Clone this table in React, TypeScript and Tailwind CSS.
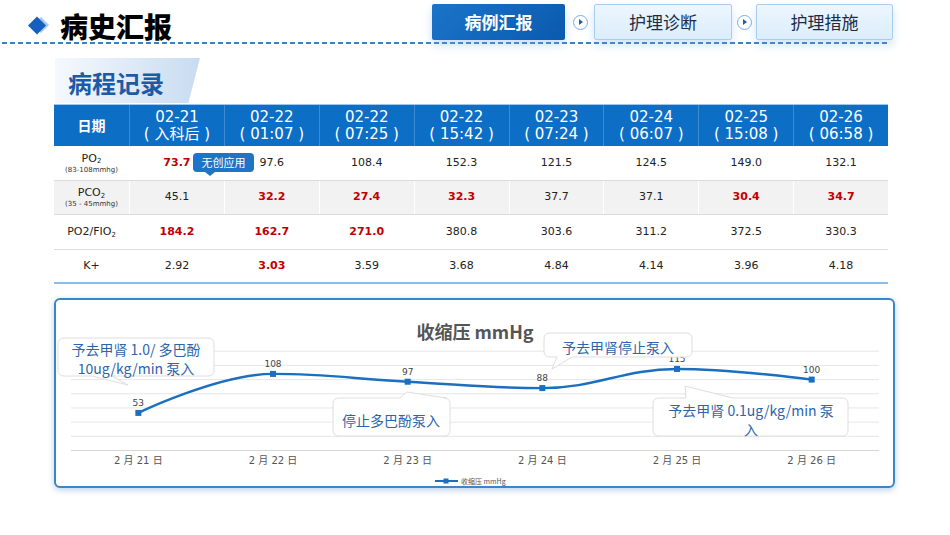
import React from "react";

const dates = [
  ["02-21", "( 入科后 )"],
  ["02-22", "( 01:07 )"],
  ["02-22", "( 07:25 )"],
  ["02-22", "( 15:42 )"],
  ["02-23", "( 07:24 )"],
  ["02-24", "( 06:07 )"],
  ["02-25", "( 15:08 )"],
  ["02-26", "( 06:58 )"],
];

// "*" marks an abnormal value (red, bold)
const rows = [
  {
    label: (
      <div className="flex flex-col items-center leading-none">
        <span className="text-[11px]">
          PO<sub className="text-[7px]">2</sub>
        </span>
        <span className="text-[7px] mt-[3px] text-[#333]">(83-108mmhg)</span>
      </div>
    ),
    gray: false,
    h: "h-[35px]",
    cells: ["73.7*", "97.6", "108.4", "152.3", "121.5", "124.5", "149.0", "132.1"],
  },
  {
    label: (
      <div className="flex flex-col items-center leading-none">
        <span className="text-[11px]">
          PCO<sub className="text-[7px]">2</sub>
        </span>
        <span className="text-[7px] mt-[3px] text-[#333]">(35 - 45mmhg)</span>
      </div>
    ),
    gray: true,
    h: "h-[34px]",
    cells: ["45.1", "32.2*", "27.4*", "32.3*", "37.7", "37.1", "30.4*", "34.7*"],
  },
  {
    label: (
      <span className="text-[11px]">
        PO2/FIO<sub className="text-[7px]">2</sub>
      </span>
    ),
    gray: false,
    h: "h-[35px]",
    cells: ["184.2*", "162.7*", "271.0*", "380.8", "303.6", "311.2", "372.5", "330.3"],
  },
  {
    label: <span className="text-[11px]">K+</span>,
    gray: false,
    h: "h-[34px]",
    cells: ["2.92", "3.03*", "3.59", "3.68", "4.84", "4.14", "3.96", "4.18"],
  },
];

const chartData = [
  { label: "2 月 21 日", v: 53 },
  { label: "2 月 22 日", v: 108 },
  { label: "2 月 23 日", v: 97 },
  { label: "2 月 24 日", v: 88 },
  { label: "2 月 25 日", v: 115 },
  { label: "2 月 26 日", v: 100 },
];

const plotLeft = 71;
const plotRight = 879;
const baseY = 451.5;
const unit = 0.7091;

type Pt = { x: number; y: number; lcx?: number; lcy?: number; rcx?: number; rcy?: number };

function splinePath(pts: Pt[]) {
  const sm = 1.5;
  const den = sm + 1;
  for (let i = 1; i < pts.length - 1; i++) {
    const p = pts[i];
    const a = pts[i - 1];
    const b = pts[i + 1];
    const lcx = (sm * p.x + a.x) / den;
    let lcy = (sm * p.y + a.y) / den;
    const rcx = (sm * p.x + b.x) / den;
    let rcy = (sm * p.y + b.y) / den;
    const corr = ((rcy - lcy) * (rcx - p.x)) / (rcx - lcx) + p.y - rcy;
    lcy += corr;
    rcy += corr;
    if (lcy > a.y && lcy > p.y) {
      lcy = Math.max(a.y, p.y);
      rcy = 2 * p.y - lcy;
    } else if (lcy < a.y && lcy < p.y) {
      lcy = Math.min(a.y, p.y);
      rcy = 2 * p.y - lcy;
    }
    if (rcy > b.y && rcy > p.y) {
      rcy = Math.max(b.y, p.y);
      lcy = 2 * p.y - rcy;
    } else if (rcy < b.y && rcy < p.y) {
      rcy = Math.min(b.y, p.y);
      lcy = 2 * p.y - rcy;
    }
    p.lcx = lcx;
    p.lcy = lcy;
    p.rcx = rcx;
    p.rcy = rcy;
  }
  let d = `M${pts[0].x} ${pts[0].y}`;
  for (let i = 1; i < pts.length; i++) {
    const a = pts[i - 1];
    const p = pts[i];
    d += ` C${a.rcx ?? a.x} ${a.rcy ?? a.y} ${p.lcx ?? p.x} ${p.lcy ?? p.y} ${p.x} ${p.y}`;
  }
  return d;
}

function calloutPath(
  x: number,
  y: number,
  w: number,
  h: number,
  side: "top" | "bottom",
  ax: number,
  bx: number,
  tx: number,
  ty: number
) {
  const r = 6;
  let d = `M${x + r} ${y}`;
  if (side === "top") d += ` L${ax} ${y} L${tx} ${ty} L${bx} ${y}`;
  d += ` L${x + w - r} ${y} Q${x + w} ${y} ${x + w} ${y + r} L${x + w} ${y + h - r} Q${x + w} ${y + h} ${x + w - r} ${y + h}`;
  if (side === "bottom") d += ` L${bx} ${y + h} L${tx} ${ty} L${ax} ${y + h}`;
  d += ` L${x + r} ${y + h} Q${x} ${y + h} ${x} ${y + h - r} L${x} ${y + r} Q${x} ${y} ${x + r} ${y} Z`;
  return d;
}

function Chart() {
  const step = (plotRight - plotLeft) / chartData.length;
  const pts: Pt[] = chartData.map((d, i) => ({
    x: plotLeft + step * (i + 0.5),
    y: baseY - d.v * unit,
  }));
  const path = splinePath(pts.map((p) => ({ ...p })));
  const grid = [1, 2, 3, 4, 5, 6, 7].map((k) => baseY - k * 20 * unit);

  return (
    <svg viewBox="56 301 837 186" className="absolute inset-0 w-[837px] h-[186px]">
      {grid.map((gy) => (
        <line key={gy} x1={plotLeft} x2={plotRight} y1={gy} y2={gy} stroke="#e6e6e6" strokeWidth="1" />
      ))}
      <line x1={plotLeft} x2={plotRight} y1={baseY} y2={baseY} stroke="#d6d6d6" strokeWidth="1" />

      <text x="475" y="339.5" textAnchor="middle" fontSize="18" fontWeight="700" fill="#555" fontFamily="'Noto Sans CJK SC', sans-serif">
        收缩压 mmHg
      </text>

      <path d={path} fill="none" stroke="#1a6fc0" strokeWidth="2.4" />
      {pts.map((p, i) => (
        <g key={i}>
          <rect x={p.x - 3} y={p.y - 3} width="6" height="6" fill="#1a6fc0" />
          <text x={p.x} y={p.y - 7} textAnchor="middle" fontSize="9" fill="#444" fontFamily="'DejaVu Sans', sans-serif">
            {chartData[i].v}
          </text>
          <text x={p.x} y={464.5} textAnchor="middle" fontSize="10" fill="#555" fontFamily="'DejaVu Sans', 'Noto Sans CJK SC', sans-serif">
            {chartData[i].label}
          </text>
        </g>
      ))}

      <g fontFamily="'Noto Sans CJK SC', sans-serif" fontSize="14" fill="#2d64aa">
        <path d={calloutPath(58, 339, 156, 38, "bottom", 92, 112, 128, 386)} fill="#fff" stroke="#dedede" />
        <text x="136" y="356" textAnchor="middle">予去甲肾 1.0/ 多巴酚</text>
        <text x="136" y="375" textAnchor="middle">10ug/kg/min 泵入</text>

        <path d={calloutPath(333, 399, 117, 38, "top", 400, 446, 407, 393)} fill="#fff" stroke="#dedede" />
        <text x="391" y="427" textAnchor="middle">停止多巴酚泵入</text>

        <path d={calloutPath(544, 334, 148, 24, "bottom", 557, 572, 552, 370)} fill="#fff" stroke="#dedede" />
        <text x="618" y="354" textAnchor="middle">予去甲肾停止泵入</text>

        <path d={calloutPath(653, 399, 195, 38, "top", 686, 733, 685, 387)} fill="#fff" stroke="#dedede" />
        <text x="751" y="416.5" textAnchor="middle">予去甲肾 0.1ug/kg/min 泵</text>
        <text x="751" y="435.5" textAnchor="middle">入</text>
      </g>

      <line x1="435" x2="458" y1="482" y2="482" stroke="#1a6fc0" strokeWidth="2" />
      <rect x="443.5" y="479.5" width="5" height="5" fill="#1a6fc0" />
      <text x="461" y="484.5" fontSize="7" fill="#555" fontFamily="'Noto Sans CJK SC', sans-serif">
        收缩压 mmHg
      </text>
    </svg>
  );
}

function Arrow() {
  return (
    <div className="w-[15px] h-[15px] rounded-full border border-[#7aaee0] bg-white flex items-center justify-center">
      <div className="ml-[1px] w-0 h-0 border-y-[3px] border-y-transparent border-l-[4px] border-l-[#1f5fa8]" />
    </div>
  );
}

export default function App() {
  return (
    <div className="w-[950px] h-[535px] bg-white overflow-hidden [font-family:'Noto_Sans_CJK_SC',sans-serif]">
      {/* header */}
      <div className="h-[42px] flex">
        <div className="pl-[28px] pt-[10px] flex items-center">
          <svg width="22" height="22" viewBox="0 0 22 22">
            <path d="M13 2 L21 10 L13 18 L5 10 Z" fill="#a9c8ee" />
            <path d="M9 1.5 L18 10.5 L9 19.5 L0 10.5 Z" fill="#1560be" />
          </svg>
          <span className="ml-[10px] text-[28px] leading-none font-black text-black">病史汇报</span>
        </div>
        <div className="ml-auto mr-[57px] pt-[4px] flex items-center h-[40px]">
          <div className="w-[133px] h-[36px] rounded-[2px] bg-[linear-gradient(135deg,#1b74c9,#0a5aae)] flex items-center justify-center text-white text-[17px] font-bold shadow-[0_5px_10px_rgba(110,165,225,0.35)]">
            病例汇报
          </div>
          <div className="ml-[8px] mr-[6px]">
            <Arrow />
          </div>
          <div className="w-[138px] h-[36px] rounded-[2px] border border-[#a7cdef] bg-[linear-gradient(180deg,#edf6fe,#dbedfb)] flex items-center justify-center text-[#1b2c48] text-[17px] shadow-[0_5px_10px_rgba(110,165,225,0.3)]">
            护理诊断
          </div>
          <div className="ml-[5px] mr-[4px]">
            <Arrow />
          </div>
          <div className="w-[137px] h-[36px] rounded-[2px] border border-[#a7cdef] bg-[linear-gradient(180deg,#edf6fe,#dbedfb)] flex items-center justify-center text-[#1b2c48] text-[17px] shadow-[0_5px_10px_rgba(110,165,225,0.3)]">
            护理措施
          </div>
        </div>
      </div>
      <div className="ml-[2px] w-[888px] h-[2px] bg-[repeating-linear-gradient(90deg,#3d7fc4_0_5px,transparent_5px_8px)]" />

      {/* section title */}
      <div className="mt-[14px] ml-[55px] w-[145px] h-[45px] bg-[linear-gradient(90deg,#f5f9fd,#c8dcf1)] [clip-path:polygon(0_0,100%_0,92%_100%,0_100%)] flex items-center pl-[13px] pt-[5px]">
        <span className="text-[24px] font-bold text-[#1c5aa8] leading-none">病程记录</span>
      </div>

      {/* table */}
      <div className="relative ml-[54px] mt-[1px] w-[834px] border-t border-[#9cc7ee] [font-family:'DejaVu_Sans','Noto_Sans_CJK_SC',sans-serif]">
        <div className="grid grid-cols-[75px_repeat(8,1fr)] h-[41px] bg-[#0d6ec6] text-white">
          <div className="flex items-center justify-center text-[14px] font-bold [font-family:'Noto_Sans_CJK_SC',sans-serif]">日期</div>
          {dates.map(([d, t], i) => (
            <div key={i} className="border-l border-[#3f8ad4] flex flex-col items-center justify-center text-[15px] leading-[17px]">
              <span>{d}</span>
              <span>{t}</span>
            </div>
          ))}
        </div>
        {rows.map((r, ri) => (
          <div
            key={ri}
            className={`grid grid-cols-[75px_repeat(8,1fr)] ${r.h} ${r.gray ? "bg-[#f2f2f2]" : "bg-white"} ${
              ri === rows.length - 1 ? "border-b-2 border-[#8bbce8]" : "border-b border-[#dcdcdc]"
            } text-[#222]`}
          >
            <div className="flex items-center justify-center">{r.label}</div>
            {r.cells.map((c, ci) => {
              const bad = c.endsWith("*");
              return (
                <div
                  key={ci}
                  className={`border-l border-white flex items-center justify-center text-[11px] ${
                    bad ? "font-bold text-[#c00000]" : ""
                  }`}
                >
                  {bad ? c.slice(0, -1) : c}
                </div>
              );
            })}
          </div>
        ))}

        {/* tooltip */}
        <div className="absolute left-[139px] top-[48px] w-[61px] h-[19px] rounded-[4px] bg-[#1d74c8] text-white text-[11px] flex items-center justify-center [font-family:'Noto_Sans_CJK_SC',sans-serif]">
          无创应用
          <div className="absolute left-[12px] top-[19px] w-0 h-0 border-x-[5px] border-x-transparent border-t-[4px] border-t-[#1d74c8]" />
        </div>
      </div>

      {/* chart */}
      <div className="relative ml-[54px] mt-[14px] w-[841px] h-[190px] rounded-[6px] border-2 border-[#3a86c8] bg-white shadow-[0_2px_6px_rgba(60,120,190,0.35)]">
        <Chart />
      </div>
    </div>
  );
}
